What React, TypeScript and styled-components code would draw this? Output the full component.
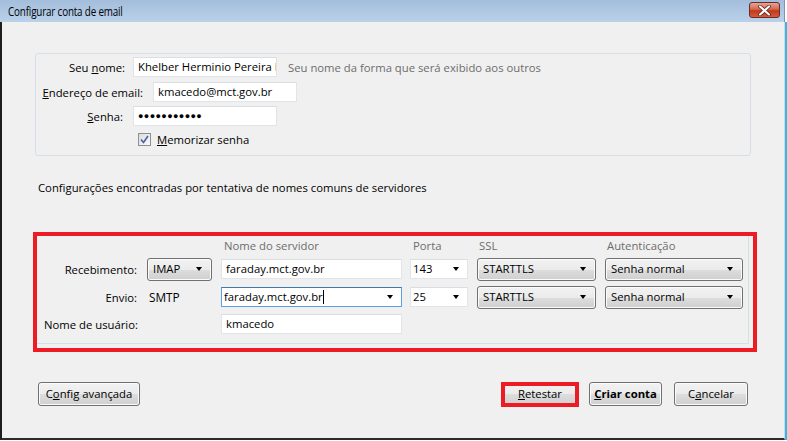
import React from "react";
import styled, { createGlobalStyle } from "styled-components";

const GlobalStyle = createGlobalStyle`
  html, body { margin: 0; padding: 0; background: #ffffff; }
  body { font-family: "Open Sans", "Noto Sans", sans-serif; font-size: 11.3px; color: #000; }
  * { box-sizing: border-box; }
`;

const Window = styled.div`
  width: 785px;
  height: 440px;
  display: flex;
  flex-direction: column;
`;

const TitleBar = styled.div`
  height: 22px;
  flex: none;
  display: flex;
  align-items: flex-start;
  justify-content: space-between;
  background: linear-gradient(#a3bddb, #bad1ea);
  border-right: 1px solid #7f93ad;
  padding-left: 8px;
  padding-right: 4px;
`;

const Title = styled.span`
  display: inline-block;
  margin-top: 3px;
  font-family: "Liberation Sans Narrow", "Open Sans", sans-serif;
  font-size: 12px;
  letter-spacing: -0.2px;
  transform: scaleX(0.82);
  transform-origin: left center;
  color: #000;
`;

const CloseButton = styled.div`
  width: 31px;
  height: 16px;
  margin-top: 2px;
  border: 1px solid #6b2a23;
  border-radius: 3px;
  background: linear-gradient(#e6a595 0%, #d1684f 45%, #c2391b 55%, #d65b3c 100%);
  display: flex;
  align-items: center;
  justify-content: center;
`;

const Content = styled.div`
  flex: 1;
  background: #f0f0f0;
  border-left: 2px solid #1e1e1e;
  border-right: 1px solid #c9dbe8;
  border-bottom: 2px solid #2b2b2b;
  box-shadow: 2px 0 0 #3cb6dc, 0 2px 0 #3cb6dc;
  display: flex;
  flex-direction: column;
  padding: 31px 33px 0 33px;
`;

const GroupBox = styled.div`
  border: 1px solid #d5dfe5;
  border-radius: 3px;
  height: 103px;
  width: 716px;
  padding-top: 3px;
  display: flex;
  flex-direction: column;
`;

const FormRow = styled.div<{ $gap?: number }>`
  display: flex;
  align-items: center;
  height: 20px;
  margin-bottom: ${(p) => p.$gap ?? 4}px;
`;

const Label = styled.label<{ $w: number; $pad?: number }>`
  width: ${(p) => p.$w}px;
  text-align: right;
  padding-right: ${(p) => p.$pad ?? 8}px;
  white-space: nowrap;
  color: #000;
`;

const Key = styled.span`
  text-decoration: underline;
`;

const TextField = styled.input<{ $w: number; $focus?: boolean }>`
  width: ${(p) => p.$w}px;
  height: 20px;
  border: 1px solid ${(p) => (p.$focus ? "#5c9fe0" : "#e1e4e8")};
  border-top-color: ${(p) => (p.$focus ? "#3d7bad" : "#dadde2")};
  background: #fff;
  padding: 0 0 1px 4px;
  font-family: "Open Sans", "Noto Sans", sans-serif;
  font-size: 11.3px;
  color: #000;
  outline: none;
`;

const Password = styled(TextField)`
  font-size: 9px;
  letter-spacing: 0.4px;
  font-weight: bold;
`;

const Hint = styled.span`
  color: #6d6d6d;
  margin-left: 11px;
  white-space: nowrap;
`;

const CheckRow = styled.div`
  display: flex;
  align-items: center;
  margin-left: 102px;
  margin-top: 2px;
  gap: 6px;
`;

const CheckBox = styled.span`
  width: 13px;
  height: 13px;
  border: 1px solid #8e8f8f;
  background: linear-gradient(135deg, #dcdcdc, #fafafa);
  display: flex;
  align-items: center;
  justify-content: center;
`;

const Info = styled.div`
  margin-top: 24px;
  margin-left: 3px;
  height: 16px;
  line-height: 16px;
  white-space: nowrap;
`;

const Highlight = styled.div`
  margin-top: 36px;
  margin-left: -2px;
  width: 724px;
  height: 120px;
  border: 4px solid #ed1c24;
`;

const ServerBox = styled.div`
  width: 712px;
  height: 108px;
  border-right: 1px solid #d5dfe5;
  border-bottom: 1px solid #d5dfe5;
  display: grid;
  grid-template-columns: 110px 74px 189px 67px 128px 138px;
  grid-template-rows: 16px 24px 24px 22px;
  row-gap: 4px;
  align-items: center;
  padding-top: 1px;
`;

const ColHead = styled.span<{ $pad?: number }>`
  color: #6d6d6d;
  padding-left: ${(p) => p.$pad ?? 3}px;
  white-space: nowrap;
`;

const RowLabel = styled.span`
  text-align: right;
  padding-right: 10px;
  white-space: nowrap;
`;

const UserLabel = styled.span`
  grid-column: 1 / 3;
  padding-left: 7px;
  white-space: nowrap;
`;

const Plain = styled.span`
  padding-left: 2px;
  font-size: 11.8px;
`;

const Arrow = styled.span`
  width: 0;
  height: 0;
  border-left: 3.5px solid transparent;
  border-right: 3.5px solid transparent;
  border-top: 4px solid #000;
  flex: none;
`;

const SelectButton = styled.div<{ $w: number }>`
  width: ${(p) => p.$w}px;
  height: 23px;
  border: 1px solid #707070;
  border-radius: 3px;
  background: linear-gradient(#f2f2f2 0%, #ebebeb 50%, #dddddd 52%, #cfcfcf 100%);
  box-shadow: inset 0 0 0 1px #fbfbfb;
  display: flex;
  align-items: center;
  justify-content: space-between;
  padding: 0 9px 1px 5px;
  white-space: nowrap;
`;

const Combo = styled.div<{ $w: number; $focus?: boolean }>`
  width: ${(p) => p.$w}px;
  height: 20px;
  border: 1px solid ${(p) => (p.$focus ? "#5c9fe0" : "#e1e4e8")};
  border-top-color: ${(p) => (p.$focus ? "#3d7bad" : "#dadde2")};
  background: #fff;
  display: flex;
  align-items: center;
  justify-content: space-between;
  padding: 0 8px 1px 2px;
  white-space: nowrap;
`;

const Caret = styled.span`
  display: inline-block;
  width: 1px;
  height: 14px;
  background: #000;
  vertical-align: middle;
`;

const ButtonBar = styled.div`
  margin-top: 30px;
  margin-left: 3px;
  width: 710px;
  display: flex;
  justify-content: space-between;
  align-items: center;
`;

const ButtonGroup = styled.div`
  display: flex;
  gap: 12px;
  align-items: center;
`;

const Button = styled.div<{ $w: number; $bold?: boolean }>`
  width: ${(p) => p.$w}px;
  height: 24px;
  border: 1px solid #707070;
  border-radius: 3px;
  background: linear-gradient(#f2f2f2 0%, #ebebeb 50%, #dddddd 52%, #cfcfcf 100%);
  box-shadow: inset 0 0 0 1px #fbfbfb;
  display: flex;
  align-items: center;
  justify-content: center;
  padding-bottom: 1px;
  font-weight: ${(p) => (p.$bold ? 700 : 400)};
  white-space: nowrap;
`;

const Marked = styled.div`
  position: relative;
  &::after {
    content: "";
    position: absolute;
    left: -2px;
    right: -2px;
    top: 0;
    bottom: -1px;
    border: 4px solid #ed1c24;
    pointer-events: none;
  }
`;

export default function App() {
  return (
    <>
      <GlobalStyle />
      <Window>
        <TitleBar>
          <Title>Configurar conta de email</Title>
          <CloseButton>
            <svg width="13" height="11" viewBox="0 0 13 11">
              <path d="M2 1.5 L11 9.5 M11 1.5 L2 9.5" stroke="#5a1a10" strokeWidth="3.6" strokeLinecap="round" />
              <path d="M2 1.5 L11 9.5 M11 1.5 L2 9.5" stroke="#ffffff" strokeWidth="2.2" strokeLinecap="round" />
            </svg>
          </CloseButton>
        </TitleBar>
        <Content>
          <GroupBox>
            <FormRow $gap={5}>
              <Label $w={97}>Seu <Key>n</Key>ome:</Label>
              <TextField $w={144} readOnly value="Khelber Herminio Pereira Macedo" />
              <Hint>Seu nome da forma que será exibido aos outros</Hint>
            </FormRow>
            <FormRow $gap={4}>
              <Label $w={117} $pad={10}><Key>E</Key>ndereço de email:</Label>
              <TextField $w={144} readOnly value="kmacedo@mct.gov.br" />
            </FormRow>
            <FormRow $gap={4}>
              <Label $w={97} $pad={10}><Key>S</Key>enha:</Label>
              <Password $w={144} readOnly value="●●●●●●●●●●●" />
            </FormRow>
            <CheckRow>
              <CheckBox>
                <svg width="9" height="9" viewBox="0 0 9 9">
                  <path d="M1 4.5 L3.5 7.5 L8 1" fill="none" stroke="#4a62a8" strokeWidth="1.6" />
                </svg>
              </CheckBox>
              <span><Key>M</Key>emorizar senha</span>
            </CheckRow>
          </GroupBox>

          <Info>Configurações encontradas por tentativa de nomes comuns de servidores</Info>

          <Highlight>
            <ServerBox>
              <span />
              <span />
              <ColHead>Nome do servidor</ColHead>
              <ColHead>Porta</ColHead>
              <ColHead $pad={2}>SSL</ColHead>
              <ColHead $pad={2}>Autenticação</ColHead>

              <RowLabel>Recebimento:</RowLabel>
              <SelectButton $w={65}>IMAP<Arrow /></SelectButton>
              <TextField $w={181} readOnly value="faraday.mct.gov.br" />
              <Combo $w={58}>143<Arrow /></Combo>
              <SelectButton $w={119}>STARTTLS<Arrow /></SelectButton>
              <SelectButton $w={138}>Senha normal<Arrow /></SelectButton>

              <RowLabel>Envio:</RowLabel>
              <Plain>SMTP</Plain>
              <Combo $w={181} $focus>
                <span>faraday.mct.gov.br<Caret /></span>
                <Arrow />
              </Combo>
              <Combo $w={58}>25<Arrow /></Combo>
              <SelectButton $w={119}>STARTTLS<Arrow /></SelectButton>
              <SelectButton $w={138}>Senha normal<Arrow /></SelectButton>

              <UserLabel>Nome de usuário:</UserLabel>
              <TextField $w={181} readOnly value="kmacedo" />
            </ServerBox>
          </Highlight>

          <ButtonBar>
            <Button $w={102}>C<Key>o</Key>nfig avançada</Button>
            <ButtonGroup>
              <Marked>
                <Button $w={74}><Key>R</Key>etestar</Button>
              </Marked>
              <Button $w={73} $bold><Key>C</Key>riar conta</Button>
              <Button $w={74}>C<Key>a</Key>ncelar</Button>
            </ButtonGroup>
          </ButtonBar>
        </Content>
      </Window>
    </>
  );
}
